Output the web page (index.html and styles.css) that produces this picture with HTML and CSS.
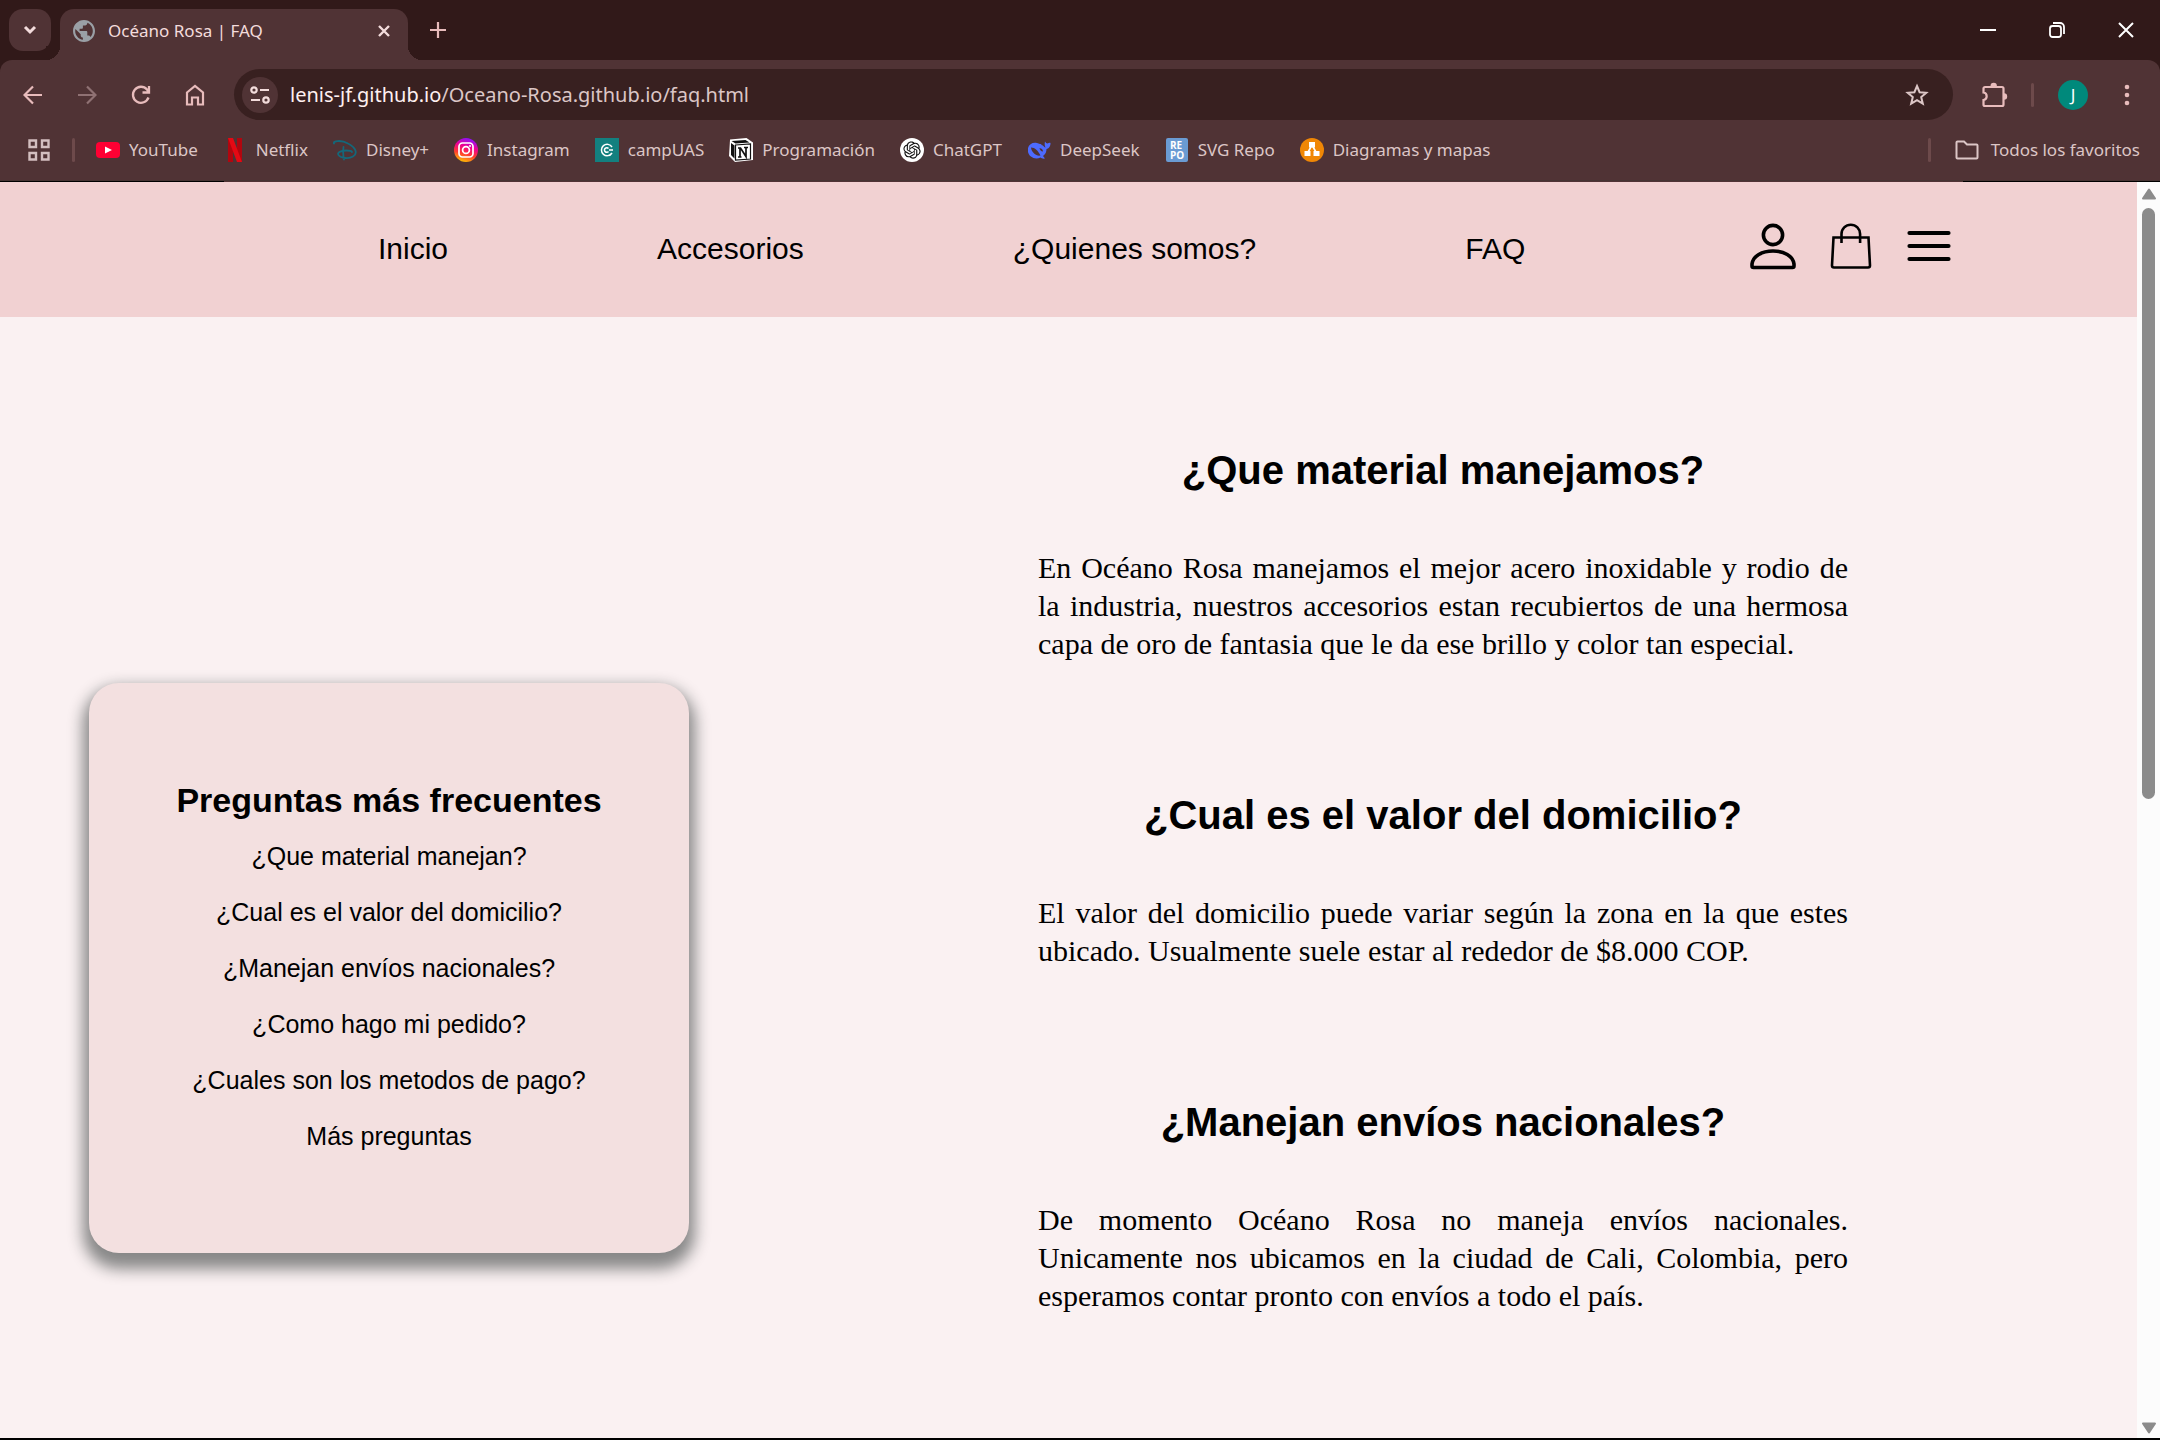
FILE: index.html
```html
<!DOCTYPE html>
<html lang="es">
<head>
<meta charset="utf-8">
<title>Océano Rosa | FAQ</title>
<link rel="stylesheet" href="styles.css">
</head>
<body>
<div class="browser">
  <div class="tabstrip">
    <button class="tab-search" aria-label="Buscar pestañas"><svg width="14" height="10" viewBox="0 0 14 10"><path d="M2 2l5 5 5-5" fill="none" stroke="#f3dcdc" stroke-width="3"/></svg></button>
    <div class="tab">
      <svg width="22" height="22" viewBox="2 2 20 20"><path d="M12 2C6.480 2 2 6.480 2 12s4.480 10 10 10 10-4.480 10-10S17.520 2 12 2zm-1 17.930c-3.950-.490-7-3.850-7-7.930 0-.620.080-1.210.210-1.790L9 15v1c0 1.100.900 2 2 2v1.930zm6.900-2.540c-.260-.810-1-1.390-1.900-1.390h-1v-3c0-.550-.450-1-1-1H8v-2h2c.550 0 1-.450 1-1V7h2c1.100 0 2-.900 2-2v-.410c2.930 1.190 5 4.060 5 7.410 0 2.080-.800 3.970-2.100 5.390z" fill="#9aa0a6"/></svg>
      <span class="tab-title">Océano Rosa | FAQ</span>
      <button class="icon-button" aria-label="Cerrar pestaña"><svg width="14" height="14" viewBox="0 0 14 14"><path d="M2 2l10 10M12 2L2 12" stroke="#f3dcdc" stroke-width="2.400"/></svg></button>
    </div>
    <button class="new-tab" aria-label="Nueva pestaña"><svg width="16" height="16" viewBox="0 0 16 16"><path d="M8 0v16M0 8h16" stroke="#e8bcbc" stroke-width="2.200"/></svg></button>
    <div class="window-controls">
      <button class="icon-button" aria-label="Minimizar"><svg width="16" height="16" viewBox="0 0 16 16"><path d="M0 8h16" stroke="#fff" stroke-width="2"/></svg></button>
      <button class="icon-button" aria-label="Restaurar"><svg width="16" height="16" viewBox="0 0 16 16" fill="none" stroke="#fff" stroke-width="1.800"><rect x="1" y="4" width="11" height="11" rx="2.500"/><path d="M4 1h7a4 4 0 0 1 4 4v7"/></svg></button>
      <button class="icon-button" aria-label="Cerrar"><svg width="16" height="16" viewBox="0 0 16 16"><path d="M1 1l14 14M15 1L1 15" stroke="#fff" stroke-width="2"/></svg></button>
    </div>
  </div>

  <div class="toolbar">
    <div class="nav-buttons">
      <button class="icon-button" aria-label="Atrás"><svg width="20" height="20" viewBox="0 0 20 20" fill="none" stroke="#e8bcbc" stroke-width="2.200"><path d="M19 10H2M10 1.500L1.500 10l8.500 8.500"/></svg></button>
      <button class="icon-button" aria-label="Adelante"><svg width="20" height="20" viewBox="0 0 20 20" fill="none" stroke="#8f7173" stroke-width="2.200"><path d="M1 10h17M10 1.500l8.500 8.500-8.500 8.500"/></svg></button>
      <button class="icon-button" aria-label="Recargar"><svg width="20" height="20" viewBox="0 0 20 20" fill="none" stroke="#e8bcbc" stroke-width="2.300"><path d="M17.500 12.500A8 8 0 1 1 16 4.500l1.500 2M18 1v6.500h-6.500"/></svg></button>
      <button class="icon-button" aria-label="Inicio del navegador"><svg width="20" height="22" viewBox="0 0 20 22" fill="none" stroke="#e8bcbc" stroke-width="2.200"><path d="M2 8.500L10 2l8 6.500V20.500h-5v-7H7v7H2z"/></svg></button>
    </div>
    <div class="omnibox">
      <button class="site-info" aria-label="Información del sitio"><svg width="20" height="18" viewBox="0 0 20 18" fill="none" stroke="#f3dcdc" stroke-width="2.200"><circle cx="4" cy="4" r="2.700"/><path d="M10 4h9M1 14h9"/><circle cx="16" cy="14" r="2.700"/></svg></button>
      <p class="url"><span class="url-host">lenis-jf.github.io</span>/Oceano-Rosa.github.io/faq.html</p>
      <button class="icon-button" aria-label="Añadir a favoritos"><svg width="24" height="24" viewBox="0 0 24 24" fill="none" stroke="#dcc6c6" stroke-width="2"><path d="M12 3l2.600 6.200 6.700.500-5.100 4.400 1.600 6.600-5.800-3.600-5.800 3.600 1.600-6.600-5.100-4.400 6.700-.500z"/></svg></button>
    </div>
    <div class="toolbar-actions">
      <button class="icon-button" aria-label="Extensiones"><svg width="26" height="26" viewBox="0 0 26 26"><path d="M3 5h17a1.500 1.500 0 0 1 1.500 1.500v16a1.500 1.500 0 0 1-1.500 1.500H3a1.500 1.500 0 0 1-1.500-1.500V18a3.800 3.800 0 0 0 0-7.500v-4A1.500 1.500 0 0 1 3 5z" fill="none" stroke="#e8bcbc" stroke-width="2.200"/><path d="M8.500 4a3.200 3.200 0 0 1 6.400 0zM22 11.300a3.200 3.200 0 0 1 0 6.400z" fill="#e8bcbc"/></svg></button>
      <span class="divider"></span>
      <button class="avatar" aria-label="Perfil">J</button>
      <button class="icon-button" aria-label="Menú del navegador"><svg width="6" height="22" viewBox="0 0 6 22" fill="#e8bcbc"><circle cx="3" cy="3" r="2.300"/><circle cx="3" cy="11" r="2.300"/><circle cx="3" cy="19" r="2.300"/></svg></button>
    </div>
  </div>

  <div class="bookmarks">
    <button class="icon-button" aria-label="Aplicaciones"><svg width="22" height="22" viewBox="0 0 22 22" fill="none" stroke="#d3bfc0" stroke-width="2.400"><path d="M1.500 1.500h6.500v6.500H1.500zM14 1.500h6.500v6.500H14zM1.500 14h6.500v6.500H1.500zM14 14h6.500v6.500H14z"/></svg></button>
    <span class="divider"></span>
    <a class="bookmark" href="#"><svg width="24" height="24" viewBox="0 0 24 24"><rect y="4" width="24" height="16" rx="4" fill="#ff0033"/><path d="M9 8.500l7 3.500-7 3.500z" fill="#fff"/></svg>YouTube</a>
    <a class="bookmark" href="#"><svg width="24" height="24" viewBox="0 0 24 24"><path d="M5 0h5v24H5zM14 0h5v24h-5z" fill="#b1060f"/><path d="M5 0h5l9 24h-5z" fill="#e50914"/></svg>Netflix</a>
    <a class="bookmark" href="#"><svg width="24" height="24" viewBox="0 0 24 24" fill="none" stroke="#14687a" stroke-width="1.800" stroke-linecap="round"><path d="M1 5.500C-.5 3 8 1.500 15 5.500c8 4 10 10 5 13-4 2.500-12 2-14.500-1.500-2-3 4-4.500 8-4.500 3 0 5 .5 5.500 1.500M10.500 9c-.5 4-.5 8 .5 12.500"/></svg>Disney+</a>
    <a class="bookmark" href="#"><svg width="24" height="24" viewBox="0 0 24 24"><defs><linearGradient id="insta" x1=".3" y1="1" x2=".6" y2="0"><stop offset="0" stop-color="#ffc800"/><stop offset=".35" stop-color="#ff3b30"/><stop offset=".65" stop-color="#f00090"/><stop offset="1" stop-color="#8a10ff"/></linearGradient></defs><circle cx="12" cy="12" r="12" fill="url(#insta)"/><g fill="none" stroke="#fff" stroke-width="1.700"><rect x="5" y="5" width="14" height="14" rx="3.500"/><circle cx="12" cy="12" r="3.400"/></g><circle cx="16" cy="8" r="1" fill="#fff"/></svg>Instagram</a>
    <a class="bookmark" href="#"><svg width="24" height="24" viewBox="0 0 24 24"><path d="M0 0h24v24H0z" fill="#13807f"/><g fill="none" stroke="#fff" stroke-width="1.500"><path d="M17 9a5.700 5.700 0 1 0 0 6"/><path d="M13.500 10.500a2.300 2.300 0 1 0 0 3M14 12h4"/></g></svg>campUAS</a>
    <a class="bookmark" href="#"><svg width="24" height="24" viewBox="0 0 24 24"><path d="M1 1.500L17.500 0 24 4.500V22L6 24 0 18z" fill="#fff"/><path d="M2.500 3L16.500 2l4 2.500L6.500 5.500zM2 5l3.500 2.500v13L2 17z" fill="#111"/><path d="M6.500 7l15-1v15l-15 1z" fill="#fff" stroke="#111" stroke-width="1.200"/><path d="M9 10h2.500l5.500 8.500V9.500M15 9.500h4M11 10v9M9 19h3.500" fill="none" stroke="#111" stroke-width="1.700"/></svg>Programación</a>
    <a class="bookmark" href="#"><svg width="24" height="24" viewBox="0 0 24 24"><circle cx="12" cy="12" r="12" fill="#fff"/><path transform="translate(3.400 3.400) scale(.72)" fill="#111" d="M22.2819 9.8211a5.9847 5.9847 0 0 0-.5157-4.9108 6.0462 6.0462 0 0 0-6.5098-2.9A6.0651 6.0651 0 0 0 4.9807 4.1818a5.9847 5.9847 0 0 0-3.9977 2.9 6.0462 6.0462 0 0 0 .7427 7.0966 5.98 5.98 0 0 0 .511 4.9107 6.051 6.051 0 0 0 6.5146 2.9001A5.9847 5.9847 0 0 0 13.2599 24a6.0557 6.0557 0 0 0 5.7718-4.2058 5.9894 5.9894 0 0 0 3.9977-2.9001 6.0557 6.0557 0 0 0-.7475-7.0729zm-9.022 12.6081a4.4755 4.4755 0 0 1-2.8764-1.0408l.1419-.0804 4.7783-2.7582a.7948.7948 0 0 0 .3927-.6813v-6.7369l2.02 1.1686a.071.071 0 0 1 .038.052v5.5826a4.504 4.504 0 0 1-4.4945 4.4944zm-9.6607-4.1254a4.4708 4.4708 0 0 1-.5346-3.0137l.142.0852 4.783 2.7582a.7712.7712 0 0 0 .7806 0l5.8428-3.3685v2.3324a.0804.0804 0 0 1-.0332.0615L9.74 19.9502a4.4992 4.4992 0 0 1-6.1408-1.6464zM2.3408 7.8956a4.485 4.485 0 0 1 2.3655-1.9728V11.6a.7664.7664 0 0 0 .3879.6765l5.8144 3.3543-2.0201 1.1685a.0757.0757 0 0 1-.071 0l-4.8303-2.7865A4.504 4.504 0 0 1 2.3408 7.872zm16.5963 3.8558L13.1038 8.364 15.1192 7.2a.0757.0757 0 0 1 .071 0l4.8303 2.7913a4.4944 4.4944 0 0 1-.6765 8.1042v-5.6772a.79.79 0 0 0-.407-.667zm2.0107-3.0231l-.142-.0852-4.7735-2.7818a.7759.7759 0 0 0-.7854 0L9.409 9.2297V6.8974a.0662.0662 0 0 1 .0284-.0615l4.8303-2.7866a4.4992 4.4992 0 0 1 6.6802 4.66zM8.3065 12.863l-2.02-1.1638a.0804.0804 0 0 1-.038-.0567V6.0742a4.4992 4.4992 0 0 1 7.3757-3.4537l-.142.0805L8.704 5.459a.7948.7948 0 0 0-.3927.6813zm1.0976-2.3654l2.602-1.4998 2.6069 1.4998v2.9994l-2.5974 1.4997-2.6067-1.4997Z"/></svg>ChatGPT</a>
    <a class="bookmark" href="#"><svg width="24" height="24" viewBox="0 0 24 24"><path d="M1 10c1-4 5-6 9-5l3 1c1-.3 1.500 0 1.500 1 2 .5 3 2.500 4 2.500-1-2-1-4-.5-6 .8 1 1.500 2 2.500 2 1-.2 2-1 3-.5 0 4-2 5.500-4 6 0 3-1 5-3.500 7l2 2.500c-2 .5-3.500-.3-4.500-1C8 22 2 19 1 14z" fill="#4d6bfe"/><path d="M4 9.500c4 0 7 3 9.500 8-4 1-9-3-9.500-8zM12.500 10c2 .3 3.500 1.500 3.500 3.500-2 0-3-1.500-3.500-3.500z" fill="#503335"/></svg>DeepSeek</a>
    <a class="bookmark" href="#"><svg width="24" height="24" viewBox="0 0 24 24"><rect x="1" width="22" height="24" rx="2" fill="#6a9bd3"/><text class="repo-mark" x="5" y="11">RE</text><text class="repo-mark" x="5" y="21">PO</text></svg>SVG Repo</a>
    <a class="bookmark" href="#"><svg width="24" height="24" viewBox="0 0 24 24"><circle cx="12" cy="12" r="12" fill="#f08705"/><path d="M12 7L7 16M12 7l5 9" stroke="#fff" stroke-width="1.600"/><path d="M9 4h6v5.500H9zM4.500 13h6v5h-6zM13.500 13h6v5h-6z" fill="#fff"/></svg>Diagramas y mapas</a>
    <a class="bookmark all-bookmarks" href="#"><span class="divider"></span><svg width="24" height="20" viewBox="0 0 24 20"><path d="M1.500 2.500a1 1 0 0 1 1-1H9l3 3h9.500a1 1 0 0 1 1 1v12a1 1 0 0 1-1 1h-19a1 1 0 0 1-1-1z" fill="none" stroke="#dcc6c6" stroke-width="2"/></svg>Todos los favoritos</a>
  </div>

  <div class="viewport">
    <div class="page">
      <header class="site-header">
        <nav class="site-nav">
          <a href="#">Inicio</a>
          <a href="#">Accesorios</a>
          <a href="#">¿Quienes somos?</a>
          <a href="#">FAQ</a>
        </nav>
        <div class="site-actions">
          <button class="icon-button" aria-label="Cuenta"><svg width="48" height="48" viewBox="0 0 48 48" fill="none" stroke="#000" stroke-width="3.600"><circle cx="24" cy="13" r="9.600"/><path d="M3 44v-2c1-8 10-13 21-13s20 5 21 13v2a1.500 1.500 0 0 1-1.500 1.500h-39A1.500 1.500 0 0 1 3 44z"/></svg></button>
          <button class="icon-button" aria-label="Carrito"><svg width="48" height="48" viewBox="0 0 48 48" fill="none" stroke="#000" stroke-width="2.600"><path d="M6.500 15.500h35L43 43.500a2 2 0 0 1-2 2H7a2 2 0 0 1-2-2zM14.500 21V12a9.300 9.300 0 0 1 18.600 0v9"/></svg></button>
          <button class="icon-button" aria-label="Menú"><svg width="48" height="48" viewBox="0 0 48 48" stroke="#000" stroke-width="4.200" stroke-linecap="round"><path d="M4.500 11h39M4.500 24h39M4.500 37h39"/></svg></button>
        </div>
      </header>
      <main class="content">
        <aside class="index-card">
          <h2>Preguntas más frecuentes</h2>
          <ul>
            <li><a href="#material">¿Que material manejan?</a></li>
            <li><a href="#domicilio">¿Cual es el valor del domicilio?</a></li>
            <li><a href="#envios">¿Manejan envíos nacionales?</a></li>
            <li><a href="#">¿Como hago mi pedido?</a></li>
            <li><a href="#">¿Cuales son los metodos de pago?</a></li>
            <li><a href="#">Más preguntas</a></li>
          </ul>
        </aside>
        <div class="answers">
          <section id="material">
            <h2>¿Que material manejamos?</h2>
            <p>En Océano Rosa manejamos el mejor acero inoxidable y rodio de la industria, nuestros accesorios estan recubiertos de una hermosa capa de oro de fantasia que le da ese brillo y color tan especial.</p>
          </section>
          <section id="domicilio">
            <h2>¿Cual es el valor del domicilio?</h2>
            <p>El valor del domicilio puede variar según la zona en la que estes ubicado. Usualmente suele estar al rededor de $8.000 COP.</p>
          </section>
          <section id="envios">
            <h2>¿Manejan envíos nacionales?</h2>
            <p>De momento Océano Rosa no maneja envíos nacionales. Unicamente nos ubicamos en la ciudad de Cali, Colombia, pero esperamos contar pronto con envíos a todo el país.</p>
          </section>
        </div>
      </main>
    </div>
    <div class="scrollbar">
      <svg width="16" height="12" viewBox="0 0 16 12"><path d="M8 1.500l6 9H2z" fill="#8b8b8b" stroke="#8b8b8b" stroke-width="2" stroke-linejoin="round"/></svg>
      <span class="scroll-track"><span class="scroll-thumb"></span></span>
      <svg width="16" height="12" viewBox="0 0 16 12"><path d="M8 10.500l6-9H2z" fill="#8b8b8b" stroke="#8b8b8b" stroke-width="2" stroke-linejoin="round"/></svg>
    </div>
  </div>
</div>
</body>
</html>
```
FILE: styles.css
```css
* { box-sizing: border-box; }
body { margin: 0; background: #faf1f2; }
h2, p, ul { margin: 0; padding: 0; }
ul { list-style: none; }
a { color: inherit; text-decoration: none; }
svg { display: block; flex: none; }
button { margin: 0; padding: 0; border: 0; background: none; font: inherit; color: inherit; }

.browser {
  display: flex;
  flex-direction: column;
  min-height: 100vh;
  border-bottom: 2px solid #000;
  background: #311919;
  font-family: "Noto Sans", sans-serif;
  font-size: 17px;
  color: #dcc6c6;
}
.icon-button, .tab-search, .new-tab, .site-info, .avatar {
  display: flex;
  align-items: center;
  justify-content: center;
  flex: none;
}

/* Tab strip */
.tabstrip {
  display: flex;
  align-items: center;
  height: 60px;
  padding-left: 9px;
}
.tab-search { width: 42px; height: 42px; border-radius: 14px; background: #503335; }
.tab {
  position: relative;
  display: flex;
  align-items: center;
  align-self: flex-end;
  gap: 13px;
  width: 348px;
  height: 51px;
  margin-left: 9px;
  padding: 0 17px 8px 13px;
  border-radius: 14px 14px 0 0;
  background: #503335;
  color: #f3dcdc;
}
.tab::before, .tab::after {
  content: "";
  position: absolute;
  bottom: 0;
  width: 14px;
  height: 14px;
}
.tab::before { right: 100%; background: radial-gradient(circle at 0 0, #311919 14px, #503335 14px); }
.tab::after { left: 100%; background: radial-gradient(circle at 100% 0, #311919 14px, #503335 14px); }
.tab-title { flex: 1; }
.new-tab { margin-left: 22px; }
.window-controls { display: flex; gap: 53px; margin-left: auto; padding-right: 26px; }

/* Toolbar */
.toolbar {
  display: flex;
  align-items: center;
  height: 60px;
  padding: 9px 30px 0 23px;
  border-radius: 12px 12px 0 0;
  background: #503335;
}
.nav-buttons { display: flex; align-items: center; gap: 34px; }
.omnibox {
  display: flex;
  align-items: center;
  flex: 1;
  height: 51px;
  margin-left: 29px;
  padding: 0 24px 0 8px;
  border-radius: 26px;
  background: #382020;
}
.site-info { width: 36px; height: 36px; border-radius: 18px; background: #503335; }
.url { flex: 1; padding-left: 12px; font-size: 20px; }
.url-host { color: #fff0f0; }
.toolbar-actions { display: flex; align-items: center; margin-left: 29px; }
.toolbar-actions .divider { margin: 0 24px 0 23px; }
.divider { flex: none; width: 3px; height: 24px; border-radius: 2px; background: #6d4a4b; }
.avatar {
  width: 30px;
  height: 30px;
  margin-right: 36px;
  border-radius: 15px;
  background: #00897b;
  color: #fff;
}

/* Bookmarks bar */
.bookmarks {
  display: flex;
  align-items: center;
  height: 61px;
  padding: 0 20px 1px 28px;
  border-bottom: 1px solid #453433;
  background: #503335;
}
.bookmarks > .divider { margin: 0 21px 0 22px; }
.bookmark { display: flex; align-items: center; gap: 9px; white-space: nowrap; }
.bookmark + .bookmark { margin-left: 25px; }
.repo-mark { font: bold 10px "Open Sans", sans-serif; fill: #fff; }
.bookmark.all-bookmarks { gap: 12px; margin-left: auto; }
.all-bookmarks .divider { margin-right: 12px; }

/* Site */
.viewport {
  display: flex;
  flex: 1;
  border-top: 1px solid;
  border-image: linear-gradient(to right, #000 225px, #503335 225px calc(100% - 198px), #000 calc(100% - 198px)) 1;
  background: #faf1f2;
}
.page { flex: 1; color: #000; font-family: "Liberation Sans", Arial, sans-serif; }
.site-header {
  display: flex;
  align-items: center;
  justify-content: space-between;
  height: 135px;
  padding: 0 184px 2px 378px;
  background: #f1d1d2;
}
.site-nav { display: flex; gap: 209px; font-size: 30px; }
.site-actions { display: flex; gap: 30px; padding-bottom: 6px; }

.content {
  display: flex;
  align-items: flex-start;
  justify-content: space-between;
  padding: 130px 289px 0 89px;
}
.index-card {
  display: flex;
  flex-direction: column;
  justify-content: center;
  width: 600px;
  min-height: 570px;
  margin-top: 236px;
  border-radius: 30px;
  background: #f3e0e0;
  box-shadow: 0 10px 15px 6px #888;
  line-height: 56px;
  text-align: center;
}
.index-card h2 { font-size: 34px; }
.index-card ul { font-size: 25px; }
.answers { display: flex; flex-direction: column; gap: 129px; width: 810px; }
.answers h2 { font-size: 40px; line-height: 46px; text-align: center; }
.answers p {
  margin-top: 56px;
  font: 30px/38px "Liberation Serif", "Times New Roman", serif;
  text-align: justify;
}

/* Scrollbar */
.scrollbar {
  display: flex;
  flex-direction: column;
  align-items: center;
  gap: 8px;
  width: 23px;
  padding: 6px 0 4px;
  background: #fcfcfc;
}
.scroll-track { flex: 1; width: 13px; }
.scroll-thumb { display: block; height: 49%; border-radius: 7px; background: #8b8b8b; }
```
